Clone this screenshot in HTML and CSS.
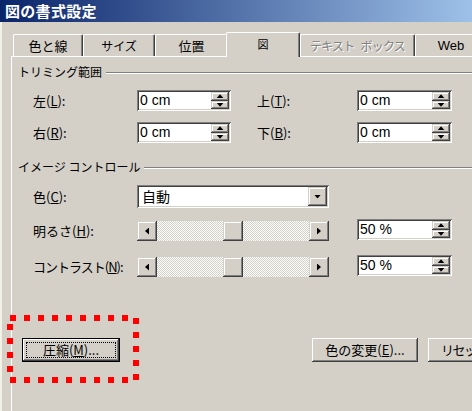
FILE: index.html
```html
<!DOCTYPE html>
<html lang="ja">
<head>
<meta charset="utf-8">
<title>図の書式設定</title>
<link rel="stylesheet" href="styles.css">
</head>
<body>
<div class="window">
  <div class="titlebar"><span class="title">図の書式設定</span></div>
  <div class="client">
    <div class="tabs">
      <div class="tab t1">色と線</div>
      <div class="tab t2">サイズ</div>
      <div class="tab t3">位置</div>
      <div class="tab sel">図</div>
      <div class="tab t5 disabled">テキスト<span class="gap"> </span>ボックス</div>
      <div class="tab t6 latin">Web</div>
    </div>
    <div class="panel">
      <div class="group-title"><span>トリミング範囲</span><span class="etch"></span></div>
      <div class="row crop-row first">
        <span class="label">左(<u>L</u>):</span>
        <div class="spin"><span class="val">0 cm</span><span class="spin-btns"><span class="sbtn"><i class="tri up"></i></span><span class="sbtn"><i class="tri down"></i></span></span></div>
        <span class="label label2">上(<u>T</u>):</span>
        <div class="spin wide"><span class="val">0 cm</span><span class="spin-btns"><span class="sbtn"><i class="tri up"></i></span><span class="sbtn"><i class="tri down"></i></span></span></div>
      </div>
      <div class="row crop-row second">
        <span class="label">右(<u>R</u>):</span>
        <div class="spin"><span class="val">0 cm</span><span class="spin-btns"><span class="sbtn"><i class="tri up"></i></span><span class="sbtn"><i class="tri down"></i></span></span></div>
        <span class="label label2">下(<u>B</u>):</span>
        <div class="spin wide"><span class="val">0 cm</span><span class="spin-btns"><span class="sbtn"><i class="tri up"></i></span><span class="sbtn"><i class="tri down"></i></span></span></div>
      </div>

      <div class="group-title g2"><span>イメージ コントロール</span><span class="etch"></span></div>
      <div class="row color-row">
        <span class="label">色(<u>C</u>):</span>
        <div class="combo"><span class="val">自動</span><span class="dbtn"><i class="tri down"></i></span></div>
      </div>
      <div class="row slider-row s1">
        <span class="label">明るさ(<u>H</u>):</span>
        <div class="scroll"><span class="sarrow"><i class="tri left"></i></span><span class="track"></span><span class="thumb"></span><span class="track"></span><span class="sarrow"><i class="tri right"></i></span></div>
        <div class="spin wide pct"><span class="val">50 %</span><span class="spin-btns"><span class="sbtn"><i class="tri up"></i></span><span class="sbtn"><i class="tri down"></i></span></span></div>
      </div>
      <div class="row slider-row s2">
        <span class="label narrow">コントラスト(<u>N</u>):</span>
        <div class="scroll"><span class="sarrow"><i class="tri left"></i></span><span class="track"></span><span class="thumb"></span><span class="track"></span><span class="sarrow"><i class="tri right"></i></span></div>
        <div class="spin wide pct"><span class="val">50 %</span><span class="spin-btns"><span class="sbtn"><i class="tri up"></i></span><span class="sbtn"><i class="tri down"></i></span></span></div>
      </div>

      <div class="button-row">
        <button class="btn btn-default"><span class="focus">圧縮(<u>M</u>)...</span></button>
        <button class="btn btn-color">色の変更(<u>E</u>)...</button>
        <button class="btn btn-reset">リセット(<u>S</u>)</button>
      </div>
    </div>
  </div>
  <svg class="highlight" width="132" height="68" viewBox="0 0 132 68">
    <rect x="3" y="3" width="126" height="62" fill="none" stroke="#ff0000" stroke-width="6" stroke-dasharray="6 8"/>
  </svg>
</div>
</body>
</html>
```

FILE: styles.css
```css
html, body {
  margin: 0;
  padding: 0;
}
body {
  width: 472px;
  height: 411px;
  overflow: hidden;
  background: #d4d0c8;
  font-family: "Noto Sans CJK JP", "Noto Sans", sans-serif;
  font-size: 13px;
  color: #000;
}
.window {
  position: relative;
  height: 411px;
}
.titlebar {
  height: 22px;
  background: linear-gradient(to right, #0a246a 0px, #a6caf0 500px);
}
.title {
  display: block;
  padding-left: 5px;
  color: #fff;
  font-weight: bold;
  font-size: 15px;
  line-height: 22px;
  letter-spacing: 0.3px;
}
.client {
  height: 389px;
  box-sizing: border-box;
  border-left: 2px solid #f2f1e6;
  padding-left: 9px;
  padding-top: 10px;
}
.tabs {
  position: relative;
  z-index: 1;
  display: flex;
  align-items: flex-end;
  height: 24px;
  margin-left: 2px;
}
.tab {
  box-sizing: border-box;
  height: 22px;
  border-top: 1px solid #fff;
  border-left: 1px solid #fff;
  border-right: 1px solid #404040;
  border-radius: 2px 2px 0 0;
  box-shadow: inset -1px 0 #808080;
  background: #d4d0c8;
  display: flex;
  align-items: center;
  justify-content: center;
  font-size: 13px;
  line-height: 16px;
  white-space: nowrap;
  flex-shrink: 0;
}
.t1 { width: 70px; }
.t2 { width: 72px; font-size: 12px; }
.t3 { width: 73px; }
.sel {
  width: 74px;
  height: 25px;
  margin-left: -2px;
  margin-bottom: -1px;
  padding-bottom: 2px;
  position: relative;
  z-index: 2;
  font-size: 11px;
}
.t5 { width: 115px; font-size: 12px; letter-spacing: -0.8px; }
.gap { display: inline-block; width: 6px; }
.t6 { width: 70px; }
.latin {
  font-family: "Liberation Sans", sans-serif;
  font-size: 13px;
  padding-left: 2px;
}
.disabled {
  color: #808080;
  text-shadow: 1px 1px #fff;
}
.panel {
  height: 355px;
  box-sizing: border-box;
  border-top: 1px solid #fff;
  border-left: 1px solid #fff;
  padding-left: 6px;
}
.group-title {
  display: flex;
  align-items: center;
  height: 16px;
  margin-top: 7px;
  font-size: 12px;
  line-height: 16px;
  white-space: nowrap;
}
.group-title.g2 {
  margin-top: 16px;
}
.etch {
  flex: 1;
  height: 0;
  margin-left: 4px;
  margin-top: 1px;
  border-top: 1px solid #808080;
  border-bottom: 1px solid #fff;
}
.row {
  display: flex;
  align-items: center;
  padding-left: 15px;
  white-space: nowrap;
}
.label {
  width: 104px;
  flex-shrink: 0;
  font-size: 13px;
  line-height: 16px;
}
.label.narrow {
  letter-spacing: -1px;
}
.label2 {
  width: 100px;
  margin-left: 26px;
}
.crop-row {
  height: 21px;
}
.crop-row.first { margin-top: 10px; }
.crop-row.second { margin-top: 11px; }

/* sunken field */
.spin, .combo {
  box-sizing: border-box;
  display: flex;
  background: #fff;
  padding: 2px;
  box-shadow: inset 1px 1px #808080, inset -1px -1px #fff, inset 2px 2px #404040, inset -2px -2px #d4d0c8;
  flex-shrink: 0;
}
.spin {
  width: 94px;
  height: 21px;
}
.spin.wide {
  width: 95px;
}
.val {
  flex: 1;
  padding-left: 1px;
  font-family: "Liberation Sans", sans-serif;
  font-size: 14px;
  line-height: 17px;
}
.spin-btns {
  width: 18px;
  display: flex;
  flex-direction: column;
}
.sbtn, .sarrow, .thumb, .dbtn {
  display: flex;
  align-items: center;
  justify-content: center;
  background: #d4d0c8;
  box-shadow: inset -1px -1px #404040, inset 1px 1px #d4d0c8, inset -2px -2px #808080, inset 2px 2px #fff;
  box-sizing: border-box;
}
.sbtn {
  flex: 1;
}
.tri {
  display: block;
  background: #000;
}
.tri.up {
  width: 7px;
  height: 4px;
  clip-path: polygon(50% 0, 100% 100%, 0 100%);
}
.tri.down {
  width: 7px;
  height: 4px;
  clip-path: polygon(0 0, 100% 0, 50% 100%);
}
.tri.left {
  width: 4px;
  height: 7px;
  clip-path: polygon(100% 0, 100% 100%, 0 50%);
}
.tri.right {
  width: 4px;
  height: 7px;
  clip-path: polygon(0 0, 100% 50%, 0 100%);
}
.color-row {
  height: 23px;
  margin-top: 10px;
}
.combo {
  width: 192px;
  height: 23px;
}
.combo .val {
  font-family: "Noto Sans CJK JP", sans-serif;
  font-size: 14px;
  line-height: 19px;
  padding-left: 3px;
}
.dbtn {
  width: 19px;
}
.slider-row {
  align-items: flex-start;
  height: 22px;
}
.slider-row .label {
  padding-top: 4px;
}
.slider-row.s1 { margin-top: 11px; }
.slider-row.s2 { margin-top: 14px; }
.scroll {
  display: flex;
  width: 192px;
  height: 20px;
  margin-top: 2px;
  flex-shrink: 0;
}
.sarrow {
  width: 20px;
}
.track {
  flex: 1;
  background: repeating-conic-gradient(#ffffff 0 25%, #d4d0c8 0 50%) 0 0 / 2px 2px;
}
.thumb {
  width: 20px;
}
.pct {
  margin-left: 28px;
}
.button-row {
  display: flex;
  margin-top: 61px;
  white-space: nowrap;
}
.btn {
  box-sizing: border-box;
  height: 24px;
  margin: 0;
  padding: 0;
  border: 0;
  background: #d4d0c8;
  font-family: "Noto Sans CJK JP", sans-serif;
  font-size: 13px;
  line-height: 16px;
  color: #000;
  display: flex;
  align-items: center;
  justify-content: center;
  flex-shrink: 0;
  box-shadow: inset -1px -1px #404040, inset 1px 1px #fff, inset -2px -2px #808080, inset 2px 2px #d4d0c8;
}
.btn-default {
  width: 98px;
  margin-left: 4px;
  padding: 3px;
  border: 1px solid #000;
}
.focus {
  flex: 1;
  align-self: stretch;
  display: flex;
  align-items: center;
  justify-content: center;
  border: 1px dotted #000;
}
.btn-color {
  width: 106px;
  margin-left: 192px;
}
.btn-reset {
  width: 100px;
  margin-left: 10px;
  justify-content: flex-start;
  padding-left: 13px;
  letter-spacing: -1.5px;
}
.highlight {
  position: absolute;
  left: 7px;
  top: 315px;
}
```
